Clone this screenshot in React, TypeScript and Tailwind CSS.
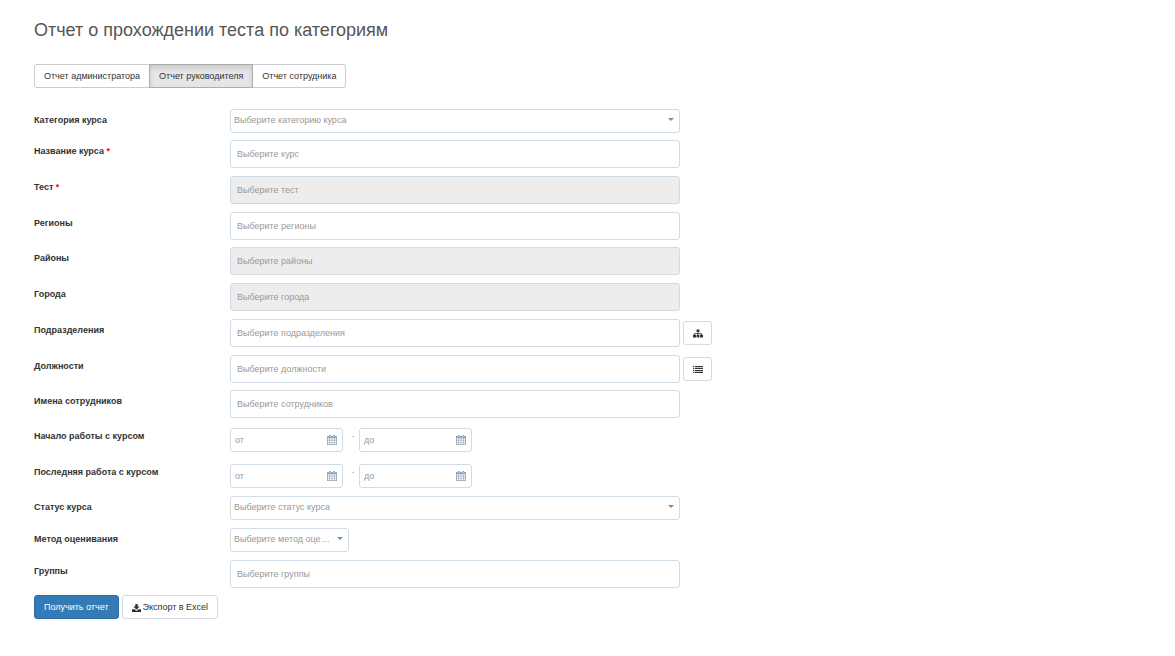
import type { ReactNode } from "react";

interface FieldProps {
    id: string;
    label: string;
    required?: boolean;
    children: ReactNode;
}

interface ControlProps {
    id: string;
    placeholder: string;
    disabled?: boolean;
}

const SitemapIcon = () => (
    <svg viewBox="0 0 10 9" className="w-2.5 h-[9px]" fill="currentColor" aria-hidden="true">
        <path d="M3.6 0.5h2.8v2.5H5.4v1.2h3.4v1.6H10v2.7H7V5.8h1V5H5.4v.8h1v2.7H3.6V5.8h1V5H2v.8h1v2.7H0V5.8h1.2V4.2h3.4V3h-1z" />
    </svg>
);

const ListIcon = () => (
    <svg viewBox="0 0 10 7" className="w-2.5 h-[7px]" fill="currentColor" aria-hidden="true">
        <path d="M0 0h1.3v1.2H0zM2 0h8v1.2H2zM0 1.9h1.3v1.2H0zM2 1.9h8v1.2H2zM0 3.9h1.3v1.2H0zM2 3.9h8v1.2H2zM0 5.8h1.3V7H0zM2 5.8h8V7H2z" />
    </svg>
);

const CalendarIcon = () => (
    <svg viewBox="0 0 10 10" className="w-2.5 h-2.5 shrink-0 text-[#94a3b8]" aria-hidden="true">
        <path d="M0 1h10v9H0z" fill="currentColor" />
        <path d="M2 0h2v2.4H2zM6 0h2v2.4H6z" fill="currentColor" />
        <path d="M2.7 0.6h.6v1.4h-.6zM6.7 0.6h.6v1.4h-.6z" fill="#fff" />
        <path
            d="M.8 3.2h1.5v1.6H.8zM2.9 3.2h1.8v1.6H2.9zM5.3 3.2h1.8v1.6H5.3zM7.7 3.2h1.5v1.6H7.7zM.8 5.4h1.5v1.6H.8zM2.9 5.4h1.8v1.6H2.9zM5.3 5.4h1.8v1.6H5.3zM7.7 5.4h1.5v1.6H7.7zM.8 7.6h1.5v1.6H.8zM2.9 7.6h1.8v1.6H2.9zM5.3 7.6h1.8v1.6H5.3zM7.7 7.6h1.5v1.6H7.7z"
            fill="#fff"
        />
    </svg>
);

const DownloadIcon = () => (
    <svg viewBox="0 0 9 8" className="w-[9px] h-2" fill="currentColor" aria-hidden="true">
        <path d="M3.3 0h2.4v2.6h2L4.5 5.7 1.3 2.6h2z" />
        <path d="M0 5.2h2.6l1.9 1.7 1.9-1.7H9V8H0z" />
    </svg>
);

const Field = ({ id, label, required, children }: FieldProps) => (
    <div className="flex items-start">
        <label htmlFor={id} className="w-49 shrink-0 pt-[5px] text-[9px] leading-3 font-bold text-[#333]">
            {label}
            {required && <span className="text-[#f00]"> *</span>}
        </label>
        {children}
    </div>
);

const TextField = ({ id, placeholder, disabled }: ControlProps) => (
    <input
        id={id}
        type="text"
        placeholder={placeholder}
        disabled={disabled}
        className="w-full max-w-[450px] h-7 px-1.5 rounded-[3px] border border-[#cfdbe7] bg-white text-[9px] text-[#333] placeholder:text-[#999] disabled:bg-[#ededed]"
    />
);

const SelectField = ({ id, placeholder, narrow }: ControlProps & { narrow?: boolean }) => (
    <div className={narrow ? "relative w-[119px]" : "relative w-full max-w-[450px]"}>
        <select
            id={id}
            className="block appearance-none w-full h-6 pl-[3px] pr-4 rounded-[3px] border border-[#cfdbe7] bg-white text-[9px] text-[#999] text-ellipsis"
        >
            <option>{placeholder}</option>
        </select>
        <svg viewBox="0 0 6 3" className="absolute right-1.5 top-[9px] w-1.5 h-[3px] pointer-events-none" fill="#888" aria-hidden="true">
            <path d="M0 0h6L3 3z" />
        </svg>
    </div>
);

const DateInput = ({ id, placeholder, label }: ControlProps & { label: string }) => (
    <div className="flex items-center w-[113px] h-6 pl-1 pr-[5px] rounded-[3px] border border-[#cfdbe7] bg-white">
        <input
            id={id}
            type="text"
            aria-label={label}
            placeholder={placeholder}
            className="min-w-0 flex-1 pt-0.5 text-[9px] text-[#333] placeholder:text-[#999]"
        />
        <CalendarIcon />
    </div>
);

const DateRange = ({ id, label }: { id: string; label: string }) => (
    <Field id={`${id}-from`} label={label}>
        <div className="flex pt-[3px] h-7">
            <DateInput id={`${id}-from`} placeholder="от" label={`${label}, от`} />
            <span className="w-4 pl-1 text-center text-[9px] leading-4 text-[#bbb]">-</span>
            <DateInput id={`${id}-to`} placeholder="до" label={`${label}, до`} />
        </div>
    </Field>
);

const IconButton = ({ label, children }: { label: string; children: ReactNode }) => (
    <button
        type="button"
        aria-label={label}
        className="flex items-center justify-center shrink-0 w-[29px] h-6 mt-0.5 ml-[3px] rounded-[3px] border border-[#cfdbe7] bg-white text-[#333]"
    >
        {children}
    </button>
);

const App = () => (
    <main className="min-h-screen px-[34px] pt-5 pb-9 bg-white font-['Liberation_Sans',Arial,sans-serif]">
        <h1 className="text-lg leading-5 text-[#555]">
            Отчет о прохождении теста по категориям
        </h1>

        <div className="flex mt-6 text-[9px] text-[#333]">
            <button type="button" className="h-6 px-[9px] pt-0.5 rounded-l-[3px] border border-[#ccc] bg-white">
                Отчет администратора
            </button>
            <button
                type="button"
                aria-pressed="true"
                className="h-6 px-[9px] pt-0.5 -ml-px border border-[#adadad] bg-[#e6e6e6] shadow-[inset_0_3px_5px_rgba(0,0,0,0.125)]"
            >
                Отчет руководителя
            </button>
            <button type="button" className="h-6 px-[9px] pt-0.5 rounded-r-[3px] border border-l-0 border-[#ccc] bg-white">
                Отчет сотрудника
            </button>
        </div>

        <form className="flex flex-col gap-[7px] mt-[21px]">
            <Field id="category" label="Категория курса">
                <SelectField id="category" placeholder="Выберите категорию курса" />
            </Field>

            <div className="flex flex-col gap-2">
                <Field id="course" label="Название курса" required>
                    <TextField id="course" placeholder="Выберите курс" />
                </Field>
                <Field id="test" label="Тест" required>
                    <TextField id="test" placeholder="Выберите тест" disabled />
                </Field>
                <Field id="regions" label="Регионы">
                    <TextField id="regions" placeholder="Выберите регионы" />
                </Field>
            </div>

            <div className="flex flex-col gap-2">
                <Field id="districts" label="Районы">
                    <TextField id="districts" placeholder="Выберите районы" disabled />
                </Field>
                <Field id="cities" label="Города">
                    <TextField id="cities" placeholder="Выберите города" disabled />
                </Field>
                <Field id="departments" label="Подразделения">
                    <TextField id="departments" placeholder="Выберите подразделения" />
                    <IconButton label="Дерево подразделений">
                        <SitemapIcon />
                    </IconButton>
                </Field>
                <Field id="positions" label="Должности">
                    <TextField id="positions" placeholder="Выберите должности" />
                    <IconButton label="Список должностей">
                        <ListIcon />
                    </IconButton>
                </Field>
            </div>

            <Field id="employees" label="Имена сотрудников">
                <TextField id="employees" placeholder="Выберите сотрудников" />
            </Field>

            <div className="flex flex-col gap-2">
                <DateRange id="started" label="Начало работы с курсом" />
                <DateRange id="last" label="Последняя работа с курсом" />
            </div>

            <div className="flex flex-col gap-2">
                <Field id="status" label="Статус курса">
                    <SelectField id="status" placeholder="Выберите статус курса" />
                </Field>
                <Field id="method" label="Метод оценивания">
                    <SelectField id="method" placeholder="Выберите метод оценивания" narrow />
                </Field>
                <Field id="groups" label="Группы">
                    <TextField id="groups" placeholder="Выберите группы" />
                </Field>
            </div>

            <div className="flex gap-[3px] text-[9px]">
                <button type="button" className="h-6 px-[9px] pt-0.5 rounded-[3px] border border-[#2e6da4] bg-[#337ab7] text-white">
                    Получить отчет
                </button>
                <button type="button" className="flex items-center gap-0.5 h-6 px-[9px] pt-0.5 rounded-[3px] border border-[#cfdbe7] bg-white text-[#333]">
                    <DownloadIcon />
                    Экспорт в Excel
                </button>
            </div>
        </form>
    </main>
);

export default App;
